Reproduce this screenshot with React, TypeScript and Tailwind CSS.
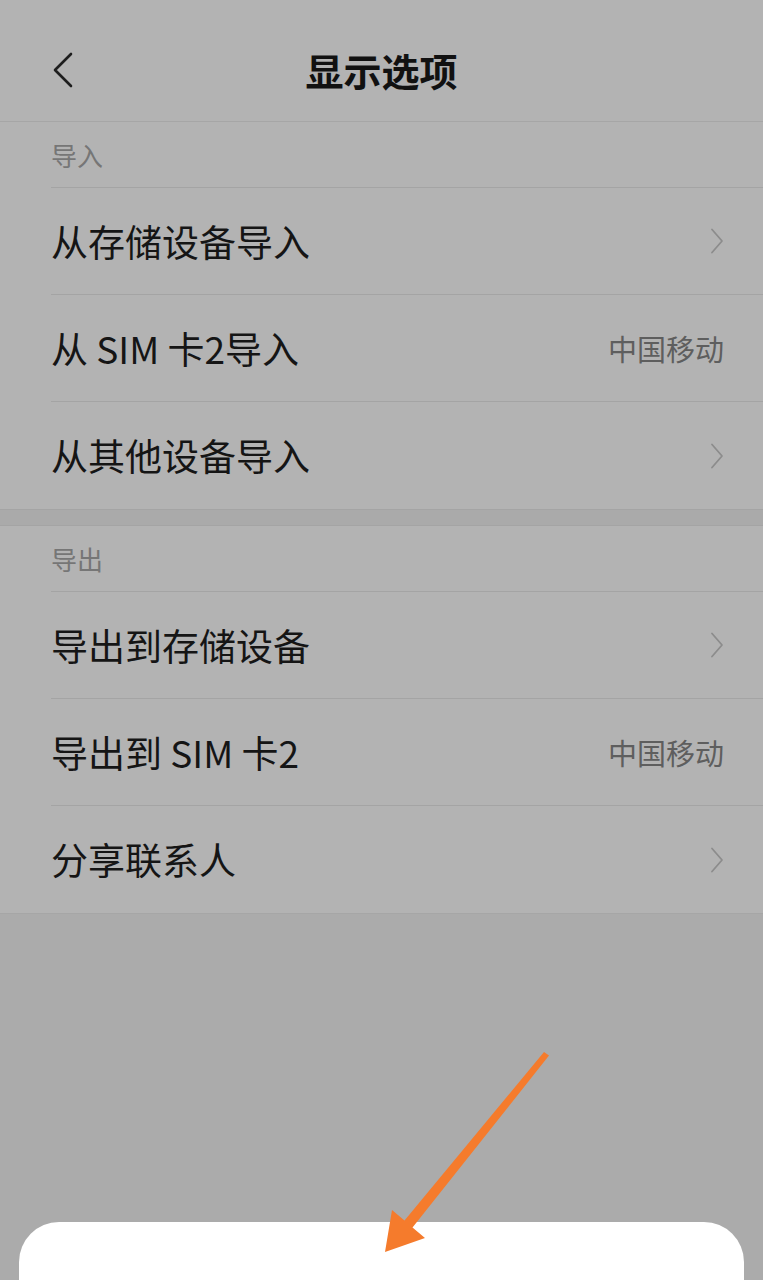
const sections = [
  {
    title: "导入",
    rows: [
      { label: "从存储设备导入", detail: null },
      { label: "从 SIM 卡2导入", detail: "中国移动" },
      { label: "从其他设备导入", detail: null },
    ],
  },
  {
    title: "导出",
    rows: [
      { label: "导出到存储设备", detail: null },
      { label: "导出到 SIM 卡2", detail: "中国移动" },
      { label: "分享联系人", detail: null },
    ],
  },
]

function ChevronRight() {
  return (
    <svg width="14" height="26" viewBox="0 0 14 26" fill="none" className="shrink-0">
      <polyline points="2,1.5 12,13 2,24.5" stroke="#8c8c8c" strokeWidth="1.8" strokeLinecap="round" strokeLinejoin="round" />
    </svg>
  )
}

function Row({ label, detail, last }: { label: string; detail: string | null; last: boolean }) {
  return (
    <div className="pl-[51px]">
      <div
        className={`h-[107px] flex items-center justify-between pr-[39px] ${last ? "" : "border-b border-[#a4a4a4]"}`}
      >
        <span className="text-[37px] text-[#151515] leading-none">{label}</span>
        {detail ? (
          <span className="text-[29px] text-[#5e5e5e] leading-none">{detail}</span>
        ) : (
          <ChevronRight />
        )}
      </div>
    </div>
  )
}

export default function App() {
  return (
    <div className="relative w-[763px] h-[1280px] overflow-hidden bg-[#ababab] flex flex-col font-['Noto_Sans_CJK_SC','Noto_Sans',sans-serif]">
      <div className="bg-[#b3b3b3]">
        <header className="h-[122px] grid grid-cols-[1fr_auto_1fr] items-center pt-[18px] border-b border-[#a6a6a6]">
          <div className="pl-[52px]">
            <svg width="22" height="36" viewBox="0 0 22 36" fill="none">
              <polyline points="19,2 3,18 19,34" stroke="#1e1e1e" strokeWidth="2.6" strokeLinecap="round" strokeLinejoin="round" />
            </svg>
          </div>
          <h1 className="text-[38px] font-semibold text-[#111] leading-none">显示选项</h1>
          <div />
        </header>

        {sections.map((section, si) => (
          <div key={section.title}>
            {si > 0 && <div className="h-[17px] bg-[#aaaaaa] border-y border-[#a4a4a4]" />}
            <div className="pl-[51px]">
              <div className="h-[66px] flex items-center border-b border-[#a4a4a4]">
                <span className="text-[26px] text-[#767676] leading-none">{section.title}</span>
              </div>
            </div>
            {section.rows.map((row, ri) => (
              <Row key={row.label} label={row.label} detail={row.detail} last={ri === section.rows.length - 1} />
            ))}
          </div>
        ))}
        <div className="border-b border-[#a6a6a6]" />
      </div>

      <div className="mt-auto mx-[19px] h-[58px] bg-white rounded-t-[40px]" />

      {/* annotation arrow */}
      <svg className="absolute inset-0 pointer-events-none" width="763" height="1280" viewBox="0 0 763 1280">
        <polygon
          points="544,1052 549,1055.5 412.5,1227.5 425,1238 385,1252 392,1210 404.5,1220.5"
          fill="#f57b2c"
        />
      </svg>
    </div>
  )
}
